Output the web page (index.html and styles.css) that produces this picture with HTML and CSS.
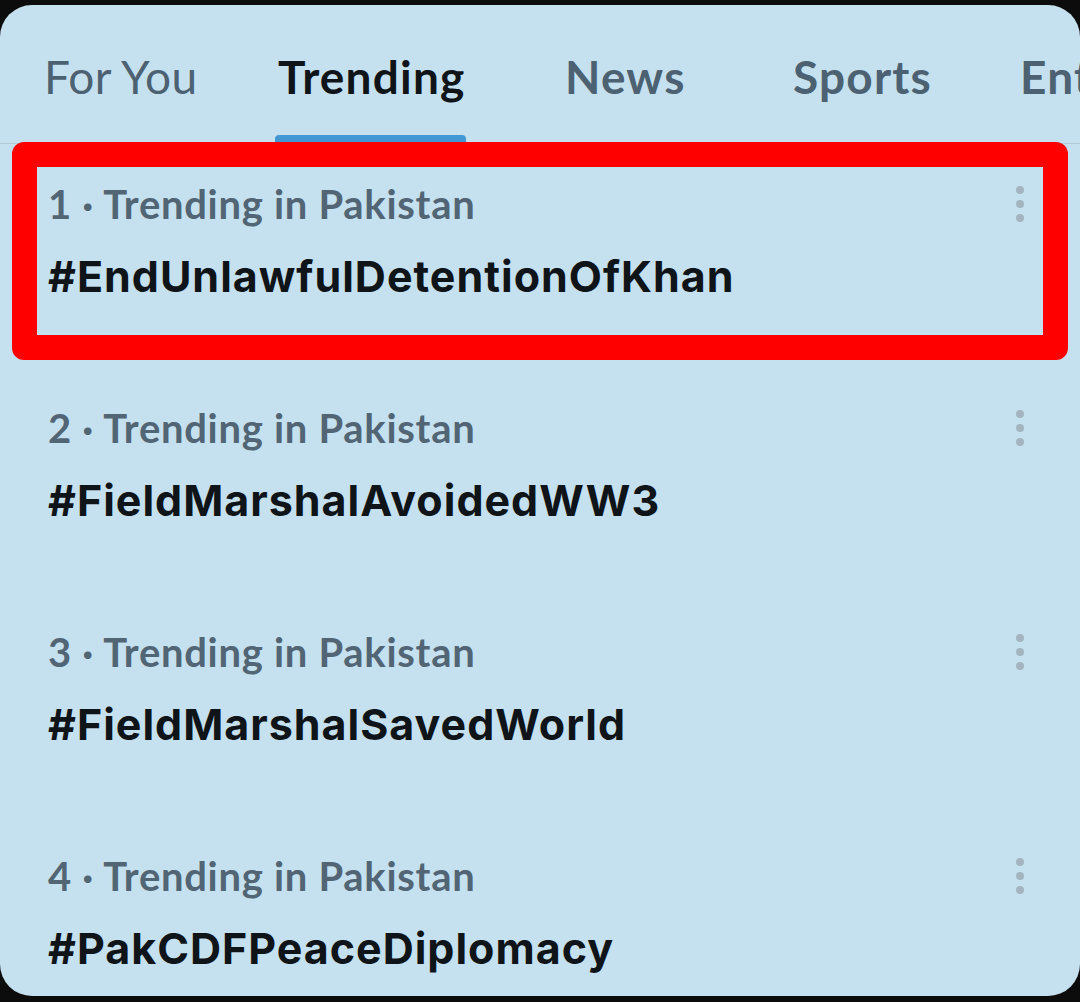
FILE: index.html
```html
<!DOCTYPE html>
<html lang="en">
<head>
<meta charset="utf-8">
<title>Explore – Trending</title>
<link rel="stylesheet" href="styles.css">
</head>
<body>
<div class="card">
  <nav class="tabs">
    <div class="tab"><span class="tab-label">For You</span></div>
    <div class="tab active"><span class="tab-label">Trending<span class="indicator"></span></span></div>
    <div class="tab"><span class="tab-label">News</span></div>
    <div class="tab"><span class="tab-label">Sports</span></div>
    <div class="tab"><span class="tab-label">Entertainment</span></div>
  </nav>
  <ul class="trends">
    <li class="trend highlighted">
      <div class="trend-text">
        <div class="meta">1 · Trending in Pakistan</div>
        <div class="topic">#EndUnlawfulDetentionOfKhan</div>
      </div>
      <div class="more"><i></i><i></i><i></i></div>
      <div class="highlight-box"></div>
    </li>
    <li class="trend">
      <div class="trend-text">
        <div class="meta">2 · Trending in Pakistan</div>
        <div class="topic">#FieldMarshalAvoidedWW3</div>
      </div>
      <div class="more"><i></i><i></i><i></i></div>
    </li>
    <li class="trend">
      <div class="trend-text">
        <div class="meta">3 · Trending in Pakistan</div>
        <div class="topic">#FieldMarshalSavedWorld</div>
      </div>
      <div class="more"><i></i><i></i><i></i></div>
    </li>
    <li class="trend">
      <div class="trend-text">
        <div class="meta">4 · Trending in Pakistan</div>
        <div class="topic">#PakCDFPeaceDiplomacy</div>
      </div>
      <div class="more"><i></i><i></i><i></i></div>
    </li>
  </ul>
</div>
</body>
</html>
```
FILE: styles.css
```css
* { box-sizing: border-box; }
html, body { margin: 0; padding: 0; }
body {
  background: #0c0c0c;
  width: 1080px;
  height: 1002px;
  overflow: hidden;
  font-family: Lato, "Noto Sans", sans-serif;
}
.card {
  margin-top: 5px;
  height: 991px;
  background: #c5e1ef;
  border-radius: 32px;
  overflow: hidden;
}
.tabs {
  display: grid;
  grid-template-columns: 234px 287px 228px 227px 1fr;
  height: 139px;
  padding-left: 44px;
  border-bottom: 1px solid #b4ccd8;
  white-space: nowrap;
  overflow: hidden;
}
.tab {
  padding-top: 46px;
}
.tab-label {
  position: relative;
  display: inline-block;
  font-size: 46px;
  line-height: 52px;
  font-weight: 700;
  letter-spacing: 1.2px;
  color: #4c6171;
}
.tab:first-child .tab-label { font-weight: 400; letter-spacing: 0.3px; }
.tab.active .tab-label { color: #0f1419; }
.indicator {
  position: absolute;
  left: -3px;
  right: 0;
  bottom: -40px;
  height: 8px;
  border-radius: 4px 4px 0 0;
  background: #4397d3;
}
.trends {
  list-style: none;
  margin: 0;
  padding: 0;
}
.trend {
  position: relative;
  display: flex;
  justify-content: space-between;
  height: 224px;
  padding: 38px 56px 0 48px;
}
.meta {
  font-size: 40px;
  line-height: 44px;
  font-weight: 700;
  letter-spacing: 0.7px;
  color: #516575;
}
.topic {
  margin-top: 24px;
  font-family: Inter, "Liberation Sans", sans-serif;
  font-size: 43px;
  line-height: 52px;
  font-weight: 700;
  letter-spacing: 1px;
  color: #0f1419;
}
.more {
  display: flex;
  flex-direction: column;
  gap: 6px;
  margin-top: 4px;
}
.more i {
  width: 8px;
  height: 8px;
  border-radius: 50%;
  background: #a3b4c0;
}
.highlight-box {
  position: absolute;
  left: 12px;
  top: -2px;
  width: 1056px;
  height: 218px;
  border: 25px solid #fe0000;
  border-radius: 12px;
}
```
